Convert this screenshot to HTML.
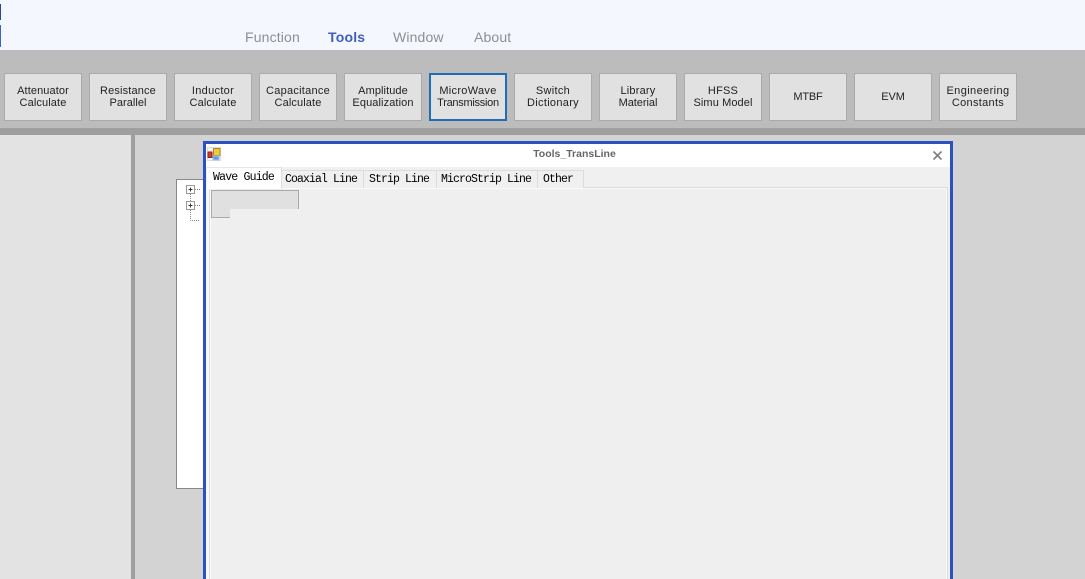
<!DOCTYPE html>
<html><head><meta charset="utf-8">
<style>
html,body{margin:0;padding:0;width:1085px;height:579px;overflow:hidden;background:#d3d3d3;font-family:"Liberation Sans",sans-serif}
div{position:absolute;box-sizing:border-box}
.m{top:29px;font-size:14px;line-height:16px;color:#8e8e8e;letter-spacing:.15px;white-space:nowrap}
.b{top:73px;width:78px;height:48px;background:#e1e1e1;border:1px solid #aaa;font-size:11px;line-height:12px;color:#222;text-align:center;display:flex;align-items:center;justify-content:center;white-space:nowrap}
.t{top:170px;height:18px;background:#f0f0f0;border:1px solid #dcdcdc;border-bottom:0;border-left:0;font-family:"Liberation Mono","Noto Serif CJK SC",monospace;font-size:11.5px;letter-spacing:-.9px;line-height:18px;color:#000;white-space:nowrap;padding-left:4px}
</style></head><body>
<div style="left:0;top:0;width:1085px;height:50px;background:#f4f8fe"></div>
<div style="left:0;top:4px;width:1px;height:16px;background:#2a4a90"></div>
<div style="left:0;top:25px;width:1px;height:22px;background:#3a66c0"></div>
<div class="m" style="left:245px">Function</div>
<div class="m" style="left:328px;color:#3f5fbe;font-weight:bold;letter-spacing:.2px">Tools</div>
<div class="m" style="left:393px">Window</div>
<div class="m" style="left:474px">About</div>
<div style="left:0;top:50px;width:1085px;height:78px;background:#bcbcbc"></div>
<div style="left:0;top:128px;width:1085px;height:7px;background:#9f9f9f"></div>
<div style="left:0;top:135px;width:131px;height:444px;background:#e3e3e3"></div>
<div style="left:131px;top:135px;width:4px;height:444px;background:#9f9f9f"></div>

<div class="b" style="left:4px"><span><span style="letter-spacing:.1px">Attenuator</span><br><span style="letter-spacing:.12px">Calculate</span></span></div>
<div class="b" style="left:89px"><span><span style="letter-spacing:.15px">Resistance</span><br><span style="letter-spacing:.05px">Parallel</span></span></div>
<div class="b" style="left:174px"><span><span style="letter-spacing:.3px">Inductor</span><br><span style="letter-spacing:.12px">Calculate</span></span></div>
<div class="b" style="left:259px"><span><span style="letter-spacing:.25px">Capacitance</span><br><span style="letter-spacing:.12px">Calculate</span></span></div>
<div class="b" style="left:344px"><span><span style="letter-spacing:.08px">Amplitude</span><br><span style="letter-spacing:.1px">Equalization</span></span></div>
<div class="b" style="left:429px;border:2px solid #1f6db5"><span><span style="letter-spacing:.3px">MicroWave</span><br><span style="letter-spacing:-.28px">Transmission</span></span></div>
<div class="b" style="left:514px"><span><span style="letter-spacing:.3px">Switch</span><br><span style="letter-spacing:.3px">Dictionary</span></span></div>
<div class="b" style="left:599px"><span><span style="letter-spacing:.2px">Library</span><br><span style="letter-spacing:-.05px">Material</span></span></div>
<div class="b" style="left:684px"><span><span style="letter-spacing:.2px">HFSS</span><br><span style="letter-spacing:.1px">Simu Model</span></span></div>
<div class="b" style="left:769px;letter-spacing:-.2px">MTBF</div>
<div class="b" style="left:854px;letter-spacing:-.1px">EVM</div>
<div class="b" style="left:939px"><span><span style="letter-spacing:.4px">Engineering</span><br><span style="letter-spacing:.3px">Constants</span></span></div>

<div style="left:176px;top:179px;width:40px;height:310px;background:#fff;border:1px solid #888"></div>
<svg style="position:absolute;left:176px;top:179px" width="30" height="50" viewBox="0 0 30 50">
<g fill="none" stroke="#888" stroke-dasharray="1 1"><path d="M14.500 15V41.500H23M19 10.500H24M19 26.500H24"/></g>
<rect x="10.500" y="6.500" width="8" height="8" fill="#fff" stroke="#999"/>
<path d="M12.500 10.500h4M14.500 8.500v4" stroke="#334" fill="none"/>
<rect x="10.500" y="22.500" width="8" height="8" fill="#fff" stroke="#999"/>
<path d="M12.500 26.500h4M14.500 24.500v4" stroke="#334" fill="none"/>
</svg>

<div style="left:203px;top:141px;width:750px;height:438px;background:#2b52bf"></div>
<div style="left:206px;top:144px;width:744px;height:435px;background:#f8f8f8"></div>
<div style="left:206px;top:144px;width:744px;height:23px;background:#fff"></div>
<div style="left:206px;top:167px;width:744px;height:21px;background:#f0f0f0"></div>
<div style="left:948px;top:188px;width:2px;height:391px;background:#f0f0f0"></div>
<svg style="position:absolute;left:207px;top:147px" width="14" height="14" viewBox="0 0 14 14">
<rect x=".5" y=".5" width="13" height="13" fill="#f4f4f4" stroke="#ddd"/>
<rect x="6.500" y="1.500" width="6.500" height="7" fill="#f3c93c" stroke="#a88a2a"/>
<rect x="1" y="5" width="4" height="5.500" fill="#d8352c" stroke="#8a2a22"/>
<rect x="6" y="9" width="6" height="4" fill="#5b9be0" stroke="#a8c4e4"/>
</svg>
<div style="left:199px;top:148px;width:751px;text-align:center;font-size:10.500px;line-height:13px;font-weight:bold;color:#666">Tools_TransLine</div>
<svg style="position:absolute;left:932px;top:150px" width="11" height="11" viewBox="0 0 11 11"><path d="M1.500 1.500L9.500 9.500M9.500 1.500L1.500 9.500" stroke="#808080" stroke-width="1.700" fill="none"/></svg>

<div style="left:209px;top:187px;width:739px;height:392px;background:#efefef;border:1px solid #dcdcdc;border-bottom:0"></div>
<div style="left:210px;top:188px;width:737px;height:391px;background:#efefef;border:1px solid #fafafa;border-bottom:0"></div>

<div class="t" style="left:281px;width:83px">Coaxial Line</div>
<div class="t" style="left:364px;width:73px;padding-left:5px">Strip Line</div>
<div class="t" style="left:437px;width:101px">MicroStrip Line</div>
<div class="t" style="left:538px;width:46px;padding-left:5px">Other</div>
<div class="t" style="left:207px;top:167px;width:75px;height:22px;background:#fff;border:0;border-top:1px solid #e6e6e6;border-right:1px solid #dcdcdc;padding-left:6px;line-height:20px;letter-spacing:-.8px">Wave Guide</div>

<div style="left:211px;top:190px;width:88px;height:28px;background:#e0e0e0;border:1px solid #aaa"></div>
<div style="left:230px;top:209px;width:70px;height:10px;background:#efefef"></div>
</body></html>
